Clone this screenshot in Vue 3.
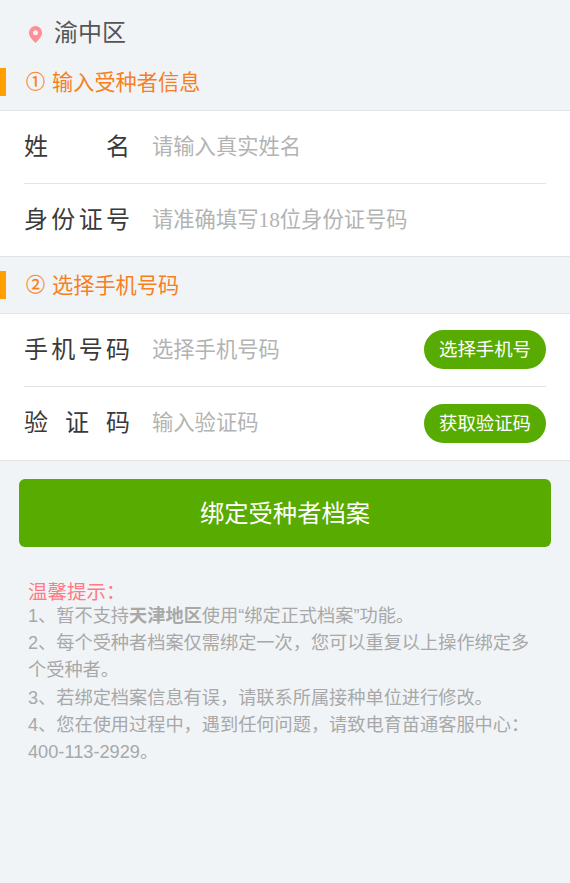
<script setup>
const tips = [
  { id: 2, text: '2、每个受种者档案仅需绑定一次，您可以重复以上操作绑定多个受种者。' },
  { id: 3, text: '3、若绑定档案信息有误，请联系所属接种单位进行修改。' },
  { id: 4, text: '4、您在使用过程中，遇到任何问题，请致电育苗通客服中心：400-113-2929。' },
]
</script>

<template>
  <div class="page">
    <div class="location">
      <svg class="pin" viewBox="0 0 16 20" width="15" height="19" aria-hidden="true">
        <path fill="#ff8e97" fill-rule="evenodd" d="M8 1a7 7 0 0 1 7 7c0 4-4 8-7 11-3-3-7-7-7-11a7 7 0 0 1 7-7zm0 4.4a2.7 2.7 0 1 0 0 5.4 2.7 2.7 0 0 0 0-5.4z" />
      </svg>
      <span>渝中区</span>
    </div>

    <div class="section-title"><span class="num">①</span><span class="title-text">输入受种者信息</span></div>
    <section class="group">
      <div class="row">
        <span class="label spread"><i>姓</i><i>名</i></span>
        <span class="placeholder">请输入真实姓名</span>
      </div>
      <div class="row">
        <span class="label spread"><i>身</i><i>份</i><i>证</i><i>号</i></span>
        <span class="placeholder">请准确填写18位身份证号码</span>
      </div>
    </section>

    <div class="section-title second"><span class="num">②</span><span class="title-text">选择手机号码</span></div>
    <section class="group phone">
      <div class="row">
        <span class="label spread"><i>手</i><i>机</i><i>号</i><i>码</i></span>
        <span class="placeholder">选择手机号码</span>
        <button type="button" class="pill">选择手机号</button>
      </div>
      <div class="row">
        <span class="label spread"><i>验</i><i>证</i><i>码</i></span>
        <span class="placeholder">输入验证码</span>
        <button type="button" class="pill">获取验证码</button>
      </div>
    </section>

    <button type="button" class="bind">绑定受种者档案</button>

    <div class="tips">
      <p class="tips-head">温馨提示：</p>
      <p>1、暂不支持<b>天津地区</b>使用“绑定正式档案”功能。</p>
      <p v-for="tip in tips" :key="tip.id">{{ tip.text }}</p>
    </div>
  </div>
</template>

<style scoped>
.page {
  min-height: 883px;
  background: #f0f4f7;
  font-family: "Liberation Sans", "Noto Sans CJK SC", sans-serif;
  overflow: hidden;
}

.location {
  display: flex;
  align-items: center;
  height: 68px;
  padding-left: 28px;
  color: #555;
  font-size: 24px;
}

.location span {
  padding-bottom: 8px;
}

.pin {
  margin-right: 11px;
}

.section-title {
  display: flex;
  align-items: center;
  height: 28px;
  margin-bottom: 14px;
  padding-left: 20px;
  border-left: 6px solid #ff9f00;
  color: #f77f1f;
  font-size: 21.2px;
}

.section-title.second {
  margin-top: 14px;
}

.title-text {
  padding-bottom: 4px;
}

.num {
  width: 26px;
  padding-bottom: 4px;
  font-family: "Noto Sans CJK SC", sans-serif;
  font-size: 19px;
  -webkit-text-stroke: 0.3px #f77f1f;
}

.group {
  padding-left: 24px;
  background: #fff;
  border-top: 1px solid #e1e3e5;
  border-bottom: 1px solid #e1e3e5;
}

.row {
  display: flex;
  align-items: center;
  height: 72px;
  margin-right: 24px;
}

.row + .row {
  border-top: 1px solid #e1e3e5;
}

.phone .row + .row {
  height: 73px;
}

.label {
  flex: none;
  width: 106px;
  margin-right: 22px;
  padding-bottom: 6px;
  color: #3a3a3a;
  font-size: 24px;
}

.spread {
  display: flex;
  justify-content: space-between;
}

.spread i {
  font-style: normal;
}

.placeholder {
  flex: 1;
  padding-bottom: 6px;
  color: #b3b3b3;
  font-family: "Liberation Serif", "Noto Sans CJK SC", serif;
  font-size: 21.3px;
}

.pill {
  width: 122px;
  height: 39px;
  padding: 0 0 3px;
  border: none;
  border-radius: 20px;
  background: #58ab00;
  color: #fff;
  font-family: inherit;
  font-size: 18.4px;
}

.row:first-child .pill {
  margin-bottom: 2px;
}

.bind {
  display: block;
  width: 532px;
  height: 68px;
  margin: 18px 0 0 19px;
  padding: 0 0 3px;
  border: none;
  border-radius: 6px;
  background: #58ab00;
  color: #fff;
  font-family: inherit;
  font-size: 24.3px;
}

.tips {
  margin-top: 32px;
  padding: 0 28px;
  color: #a8a8a8;
  font-size: 18.2px;
  line-height: 27.2px;
}

.tips p {
  margin: 0;
}

.tips-head {
  height: 24px;
  color: #ff7b85;
  font-size: 19.5px;
}

.tips b {
  font-weight: bold;
}
</style>
